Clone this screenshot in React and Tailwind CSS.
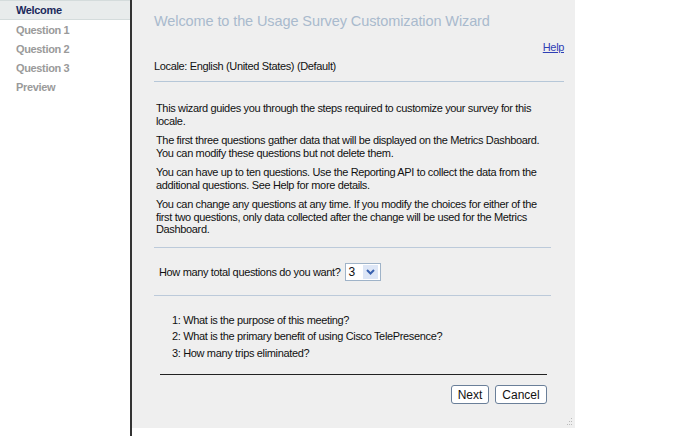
import React from 'react'

const steps = ['Welcome', 'Question 1', 'Question 2', 'Question 3', 'Preview']

const paragraphs = [
    'This wizard guides you through the steps required to customize your survey for this locale.',
    'The first three questions gather data that will be displayed on the Metrics Dashboard. You can modify these questions but not delete them.',
    'You can have up to ten questions. Use the Reporting API to collect the data from the additional questions. See Help for more details.',
    'You can change any questions at any time. If you modify the choices for either of the first two questions, only data collected after the change will be used for the Metrics Dashboard.',
]

const questions = [
    '1: What is the purpose of this meeting?',
    '2: What is the primary benefit of using Cisco TelePresence?',
    '3: How many trips eliminated?',
]

const App = () => {
    return (
        <div className="flex h-[436px] w-[700px] bg-white text-[11px] tracking-[-0.35px] text-[#111] font-['Liberation_Sans',Arial,sans-serif]">
            {/* Steps */}
            <nav className="w-[132px] border-r-2 border-[#333] bg-white">
                {steps.map((s, i) => (
                    <div
                        key={s}
                        className={
                            i === 0
                                ? 'h-[20px] border-y border-[#d4dcdc] bg-[#e8ecec] pl-[16px] leading-[18px] font-bold text-[#1b2a5c]'
                                : 'h-[19px] pl-[16px] leading-[20px] font-bold text-[#9a9a9a]'
                        }
                    >
                        {s}
                    </div>
                ))}
            </nav>

            {/* Wizard panel */}
            <main className="relative flex h-[428px] w-[443px] flex-col bg-[#efefef] pl-[22px] pr-[11px]">
                <h1 className="mt-[11px] text-[14.5px] leading-[20px] tracking-[-0.1px] text-[#a9bacd]">
                    Welcome to the Usage Survey Customization Wizard
                </h1>
                <div className="mt-[9px] flex justify-end">
                    <a className="text-[#2f3fb5] underline leading-[14px]">Help</a>
                </div>
                <div className="mt-[5px] border-b border-[#b6c7d8] pb-[8px] leading-[14px]">
                    Locale: English (United States) (Default)
                </div>

                <div className="mr-[13px] mt-[20px] flex flex-col gap-[7px] pl-[2px] leading-[12.5px]">
                    {paragraphs.map((p) => (
                        <p key={p}>{p}</p>
                    ))}
                </div>

                <div className="mr-[13px] mt-[11px] border-t border-[#bccada] pl-[5px] pt-[15px]">
                    <div className="flex items-center gap-[4px] leading-[14px]">
                        <span>How many total questions do you want?</span>
                        <div className="flex h-[18px] w-[36px] items-center justify-between border border-[#9fb3c8] bg-white pl-[3px] pr-[2px]">
                            <span className="text-[12px]">3</span>
                            <span className="flex h-[14px] w-[15px] items-center justify-center bg-[#dde6f6]">
                                <svg width="9" height="6" viewBox="0 0 9 6">
                                    <path d="M1 1 L4.5 4.5 L8 1" stroke="#3a62b0" strokeWidth="2" fill="none" />
                                </svg>
                            </span>
                        </div>
                    </div>
                </div>

                <div className="mr-[13px] mt-[14px] border-t border-[#bccada] pl-[18px] pt-[17px]">
                    {questions.map((q) => (
                        <div key={q} className="h-[16.5px] leading-[14px]">
                            {q}
                        </div>
                    ))}
                </div>

                <div className="ml-[6px] mr-[17px] mt-[12px] border-t border-[#222] pt-[10px]">
                    <div className="flex justify-end gap-[6px]">
                        <button className="h-[19px] w-[38px] rounded-[3px] border border-[#6a7f99] bg-white text-[12px] leading-[16px] tracking-normal">
                            Next
                        </button>
                        <button className="h-[19px] w-[52px] rounded-[3px] border border-[#6a7f99] bg-white text-[12px] leading-[16px] tracking-normal">
                            Cancel
                        </button>
                    </div>
                </div>

                {/* resize grip */}
                <svg className="absolute bottom-[2px] right-[2px]" width="8" height="8" viewBox="0 0 8 8">
                    <rect x="6" y="0" width="1" height="1" fill="#bbb" />
                    <rect x="4" y="3" width="1" height="1" fill="#bbb" />
                    <rect x="6" y="3" width="1" height="1" fill="#bbb" />
                    <rect x="2" y="6" width="1" height="1" fill="#bbb" />
                    <rect x="4" y="6" width="1" height="1" fill="#bbb" />
                    <rect x="6" y="6" width="1" height="1" fill="#bbb" />
                </svg>
            </main>
        </div>
    )
}

export default App
